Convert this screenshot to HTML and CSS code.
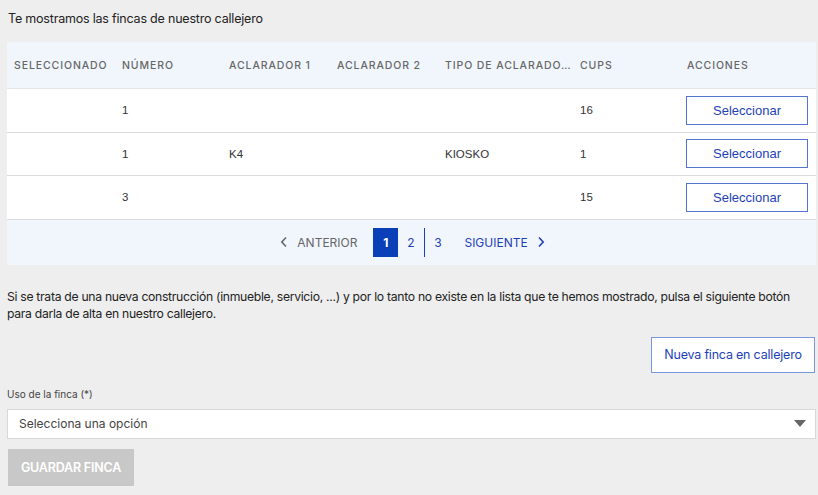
FILE: index.html
```html
<!DOCTYPE html>
<html lang="es">
<head>
<meta charset="utf-8">
<link rel="stylesheet" href="styles.css">
</head>
<body>
<div class="page">
  <p class="intro">Te mostramos las fincas de nuestro callejero</p>
  <div class="table-wrap">
    <table class="fincas">
      <colgroup>
        <col class="c1"><col class="c2"><col class="c3"><col class="c4"><col class="c5"><col class="c6"><col class="c7">
      </colgroup>
      <thead>
        <tr>
          <th>Seleccionado</th><th>Número</th><th>Aclarador 1</th><th>Aclarador 2</th><th>Tipo de aclarado…</th><th>CUPS</th><th>Acciones</th>
        </tr>
      </thead>
      <tbody>
        <tr><td></td><td>1</td><td></td><td></td><td></td><td>16</td><td><button class="btn-outline sel">Seleccionar</button></td></tr>
        <tr><td></td><td>1</td><td>K4</td><td></td><td>KIOSKO</td><td>1</td><td><button class="btn-outline sel">Seleccionar</button></td></tr>
        <tr><td></td><td>3</td><td></td><td></td><td></td><td>15</td><td><button class="btn-outline sel">Seleccionar</button></td></tr>
      </tbody>
    </table>
    <nav class="pager">
      <span class="prev"><svg width="8" height="12" viewBox="0 0 8 12"><path d="M6 1.5 L1.8 6 L6 10.5" fill="none" stroke="#666" stroke-width="1.6"/></svg>ANTERIOR</span>
      <span class="pages"><span class="pg active">1</span><span class="pg">2</span><span class="sep"></span><span class="pg">3</span></span>
      <span class="next">SIGUIENTE<svg width="8" height="12" viewBox="0 0 8 12"><path d="M2 1.5 L6.2 6 L2 10.5" fill="none" stroke="#1d3fb8" stroke-width="1.6"/></svg></span>
    </nav>
  </div>
  <p class="info">Si se trata de una nueva construcción (inmueble, servicio, ...) y por lo tanto no existe en la lista que te hemos mostrado, pulsa el siguiente botón para darla de alta en nuestro callejero.</p>
  <div class="actions">
    <button class="btn-outline nueva">Nueva finca en callejero</button>
  </div>
  <label class="field-label">Uso de la finca (*)</label>
  <div class="select">
    <span>Selecciona una opción</span>
    <svg width="12" height="7" viewBox="0 0 12 7"><path d="M0 0 H12 L6 7 Z" fill="#666"/></svg>
  </div>
  <button class="btn-save">GUARDAR FINCA</button>
</div>
</body>
</html>
```
FILE: styles.css
```css
html, body {
  margin: 0;
  padding: 0;
  background: #eeeeee;
}
body {
  font-family: Inter, "Noto Sans", sans-serif;
  color: #222;
}
.page {
  width: 809px;
  padding: 0 0 0 7px;
}
.intro {
  margin: 0;
  padding: 11px 0 0 1px;
  height: 31px;
  font-size: 12.5px;
  letter-spacing: -0.2px;
  color: #222;
}
.table-wrap {
  background: #f1f6fd;
}
.fincas {
  width: 809px;
  border-collapse: collapse;
  table-layout: fixed;
}
.c1 { width: 108px; }
.c2 { width: 107px; }
.c3 { width: 108px; }
.c4 { width: 108px; }
.c5 { width: 135px; }
.c6 { width: 107px; }
.c7 { width: 136px; }
.fincas th {
  height: 46px;
  padding: 0 0 0 7px;
  text-align: left;
  font-family: Inter, sans-serif;
  font-size: 10.5px;
  font-weight: 500;
  letter-spacing: 0.9px;
  text-transform: uppercase;
  color: #666;
  white-space: nowrap;
  overflow: hidden;
  text-overflow: ellipsis;
  border-bottom: 1px solid #e3e6ea;
}
.fincas td {
  height: 42.5px;
  padding: 0 0 0 7px;
  background: #fff;
  font-family: "Liberation Sans", Arial, sans-serif;
  font-size: 11.5px;
  color: #333;
  border-bottom: 1px solid #dcdcdc;
}
.fincas td:last-child {
  padding: 0 8px 0 0;
  text-align: right;
}
.btn-outline {
  background: #fff;
  border: 1px solid #5574d0;
  color: #1d3fb8;
  font-family: "Liberation Sans", Arial, sans-serif;
  font-size: 13px;
  cursor: pointer;
}
.sel {
  width: 122px;
  height: 29px;
  padding: 0;
}
.pager {
  height: 45px;
  display: flex;
  align-items: center;
  justify-content: center;
  font-family: Inter, sans-serif;
  font-size: 12px;
  padding-left: 2px;
}
.prev, .next {
  display: flex;
  align-items: center;
  gap: 9px;
}
.prev { color: #666; }
.next { color: #1d3fb8; }
.pages {
  display: flex;
  align-items: center;
  margin: 0 14px 0 16px;
}
.pg {
  width: 25px;
  height: 29px;
  display: flex;
  align-items: center;
  justify-content: center;
  color: #1d3fb8;
  font-size: 12px;
}
.pg.active {
  background: #0a3fb8;
  color: #fff;
  font-weight: 700;
}
.sep {
  width: 1px;
  height: 29px;
  background: #1d3fb8;
  margin: 0 0 0 1px;
}
.info {
  margin: 0;
  padding: 23px 0 0 0;
  font-size: 12.2px;
  letter-spacing: -0.3px;
  line-height: 17.5px;
  color: #222;
}
.actions {
  display: flex;
  justify-content: flex-end;
  margin-top: 14px;
}
.nueva {
  width: 164px;
  height: 36px;
  padding: 0;
  border-color: #7b95df;
  font-family: Inter, sans-serif;
  font-size: 12.5px;
  letter-spacing: -0.2px;
  margin-right: 1px;
}
.field-label {
  display: block;
  margin-top: 15px;
  font-size: 10px;
  color: #444;
  height: 21px;
}
.select {
  box-sizing: border-box;
  height: 30px;
  background: #fff;
  border: 1px solid #d8d8d8;
  display: flex;
  align-items: center;
  justify-content: space-between;
  padding: 0 9px 0 11px;
  font-size: 12px;
  color: #444;
  width: 809px;
}
.btn-save {
  display: block;
  margin-top: 10px;
  margin-left: 1px;
  width: 126px;
  height: 37px;
  background: #c8c8c8;
  border: 0;
  color: #fff;
  font-family: Inter, sans-serif;
  font-weight: 600;
  font-size: 12.5px;
  letter-spacing: -0.2px;
}
```
